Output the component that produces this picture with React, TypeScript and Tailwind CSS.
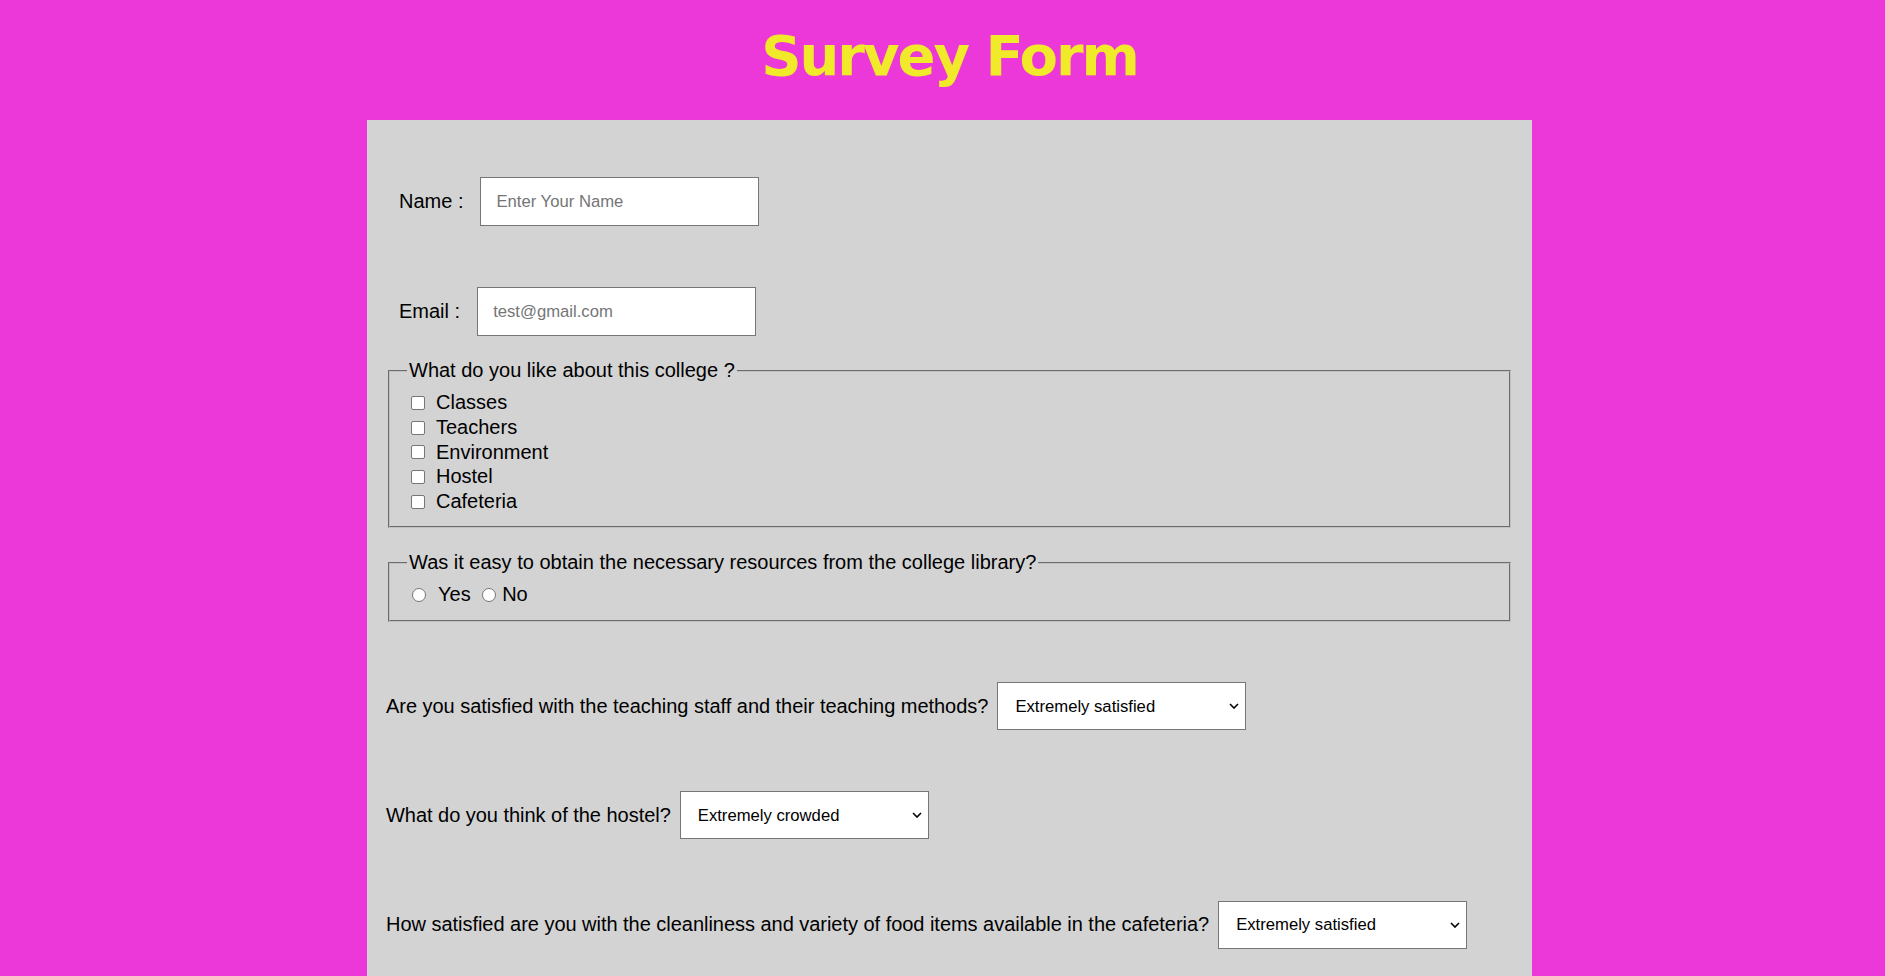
const likes = ["Classes", "Teachers", "Environment", "Hostel", "Cafeteria"];

const satisfaction = [
  "Extremely satisfied",
  "Satisfied",
  "Neutral",
  "Unsatisfied",
  "Extremely unsatisfied",
];

const hostel = ["Extremely crowded", "Crowded", "Comfortable", "Spacious"];

export default function App() {
  return (
    <div className="min-h-screen flex flex-col bg-[#ec38d8] font-['Liberation_Sans',Arial,sans-serif] text-black">
      <div className="ml-[367px] w-[1165px] flex-1 flex flex-col">
        <div className="h-[120px] pt-[24px]">
          <h1 className="text-center font-['DejaVu_Sans',Verdana,sans-serif] font-bold text-[56px] leading-[64px] tracking-[-2px] text-[#f0ea2a]">
            Survey Form
          </h1>
        </div>

        <form className="flex-1 bg-[#d3d3d3] px-[19px] pb-[28px] text-[20px] leading-[23px]">
          <div className="mt-[57px] flex items-center">
            <label className="ml-[13px]">Name :</label>
            <TextInput placeholder="Enter Your Name" />
          </div>
          <div className="mt-[61px] flex items-center">
            <label className="ml-[13px]">Email :</label>
            <TextInput placeholder="test@gmail.com" />
          </div>

          <fieldset className="mt-[23px] mx-[2px] border-2 [border-style:groove] border-[#c0c0c0] pl-[17px] pr-[15px] pt-[8.5px] pb-[12.5px]">
            <legend className="px-[2px]">What do you like about this college ?</legend>
            {likes.map((l) => (
              <div key={l} className="flex items-center h-[24.7px]">
                <input
                  type="checkbox"
                  className="ml-[4px] w-[14px] h-[14px] appearance-none border border-[#767676] rounded-[2px] bg-white"
                />
                <span className="ml-[11px]">{l}</span>
              </div>
            ))}
          </fieldset>

          <fieldset className="mt-[23px] mx-[2px] border-2 [border-style:groove] border-[#c0c0c0] pl-[17px] pr-[15px] pt-[8px] pb-[12.5px]">
            <legend className="px-[2px]">
              Was it easy to obtain the necessary resources from the college library?
            </legend>
            <div className="flex items-center h-[24.7px]">
              <input
                type="radio"
                name="library"
                className="ml-[5px] w-[14px] h-[14px] appearance-none border border-[#767676] rounded-full bg-white"
              />
              <span className="ml-[12px]">Yes</span>
              <input
                type="radio"
                name="library"
                className="ml-[11.5px] w-[14px] h-[14px] appearance-none border border-[#767676] rounded-full bg-white"
              />
              <span className="ml-[6px]">No</span>
            </div>
          </fieldset>

          <Question
            className="mt-[60.5px]"
            text="Are you satisfied with the teaching staff and their teaching methods?"
            options={satisfaction}
          />
          <Question
            className="mt-[61px]"
            text="What do you think of the hostel?"
            options={hostel}
          />
          <Question
            className="mt-[61.5px]"
            text="How satisfied are you with the cleanliness and variety of food items available in the cafeteria?"
            options={satisfaction}
          />
        </form>
      </div>
    </div>
  );
}

function TextInput({ placeholder }: { placeholder: string }) {
  return (
    <input
      type="text"
      placeholder={placeholder}
      className="ml-[17px] w-[279px] h-[49px] border border-[#767676] bg-white pl-[15px] text-[16.67px] text-black placeholder:text-[#757575] outline-none"
    />
  );
}

function Question({
  text,
  options,
  className,
}: {
  text: string;
  options: string[];
  className: string;
}) {
  return (
    <div className={"flex items-center " + className}>
      <span className="tracking-[-0.03px]">{text}</span>
      <div className="relative ml-[9px]">
        <select className="appearance-none w-[249px] h-[48px] border border-[#767676] bg-white pl-[17px] text-[16.67px] text-black outline-none">
          {options.map((o) => (
            <option key={o}>{o}</option>
          ))}
        </select>
        <svg
          width="10"
          height="6"
          viewBox="0 0 10 6"
          className="absolute right-[7px] top-[21px] pointer-events-none"
        >
          <path d="M1 1l4 4 4-4" fill="none" stroke="#000" strokeWidth="1.6" />
        </svg>
      </div>
    </div>
  );
}
